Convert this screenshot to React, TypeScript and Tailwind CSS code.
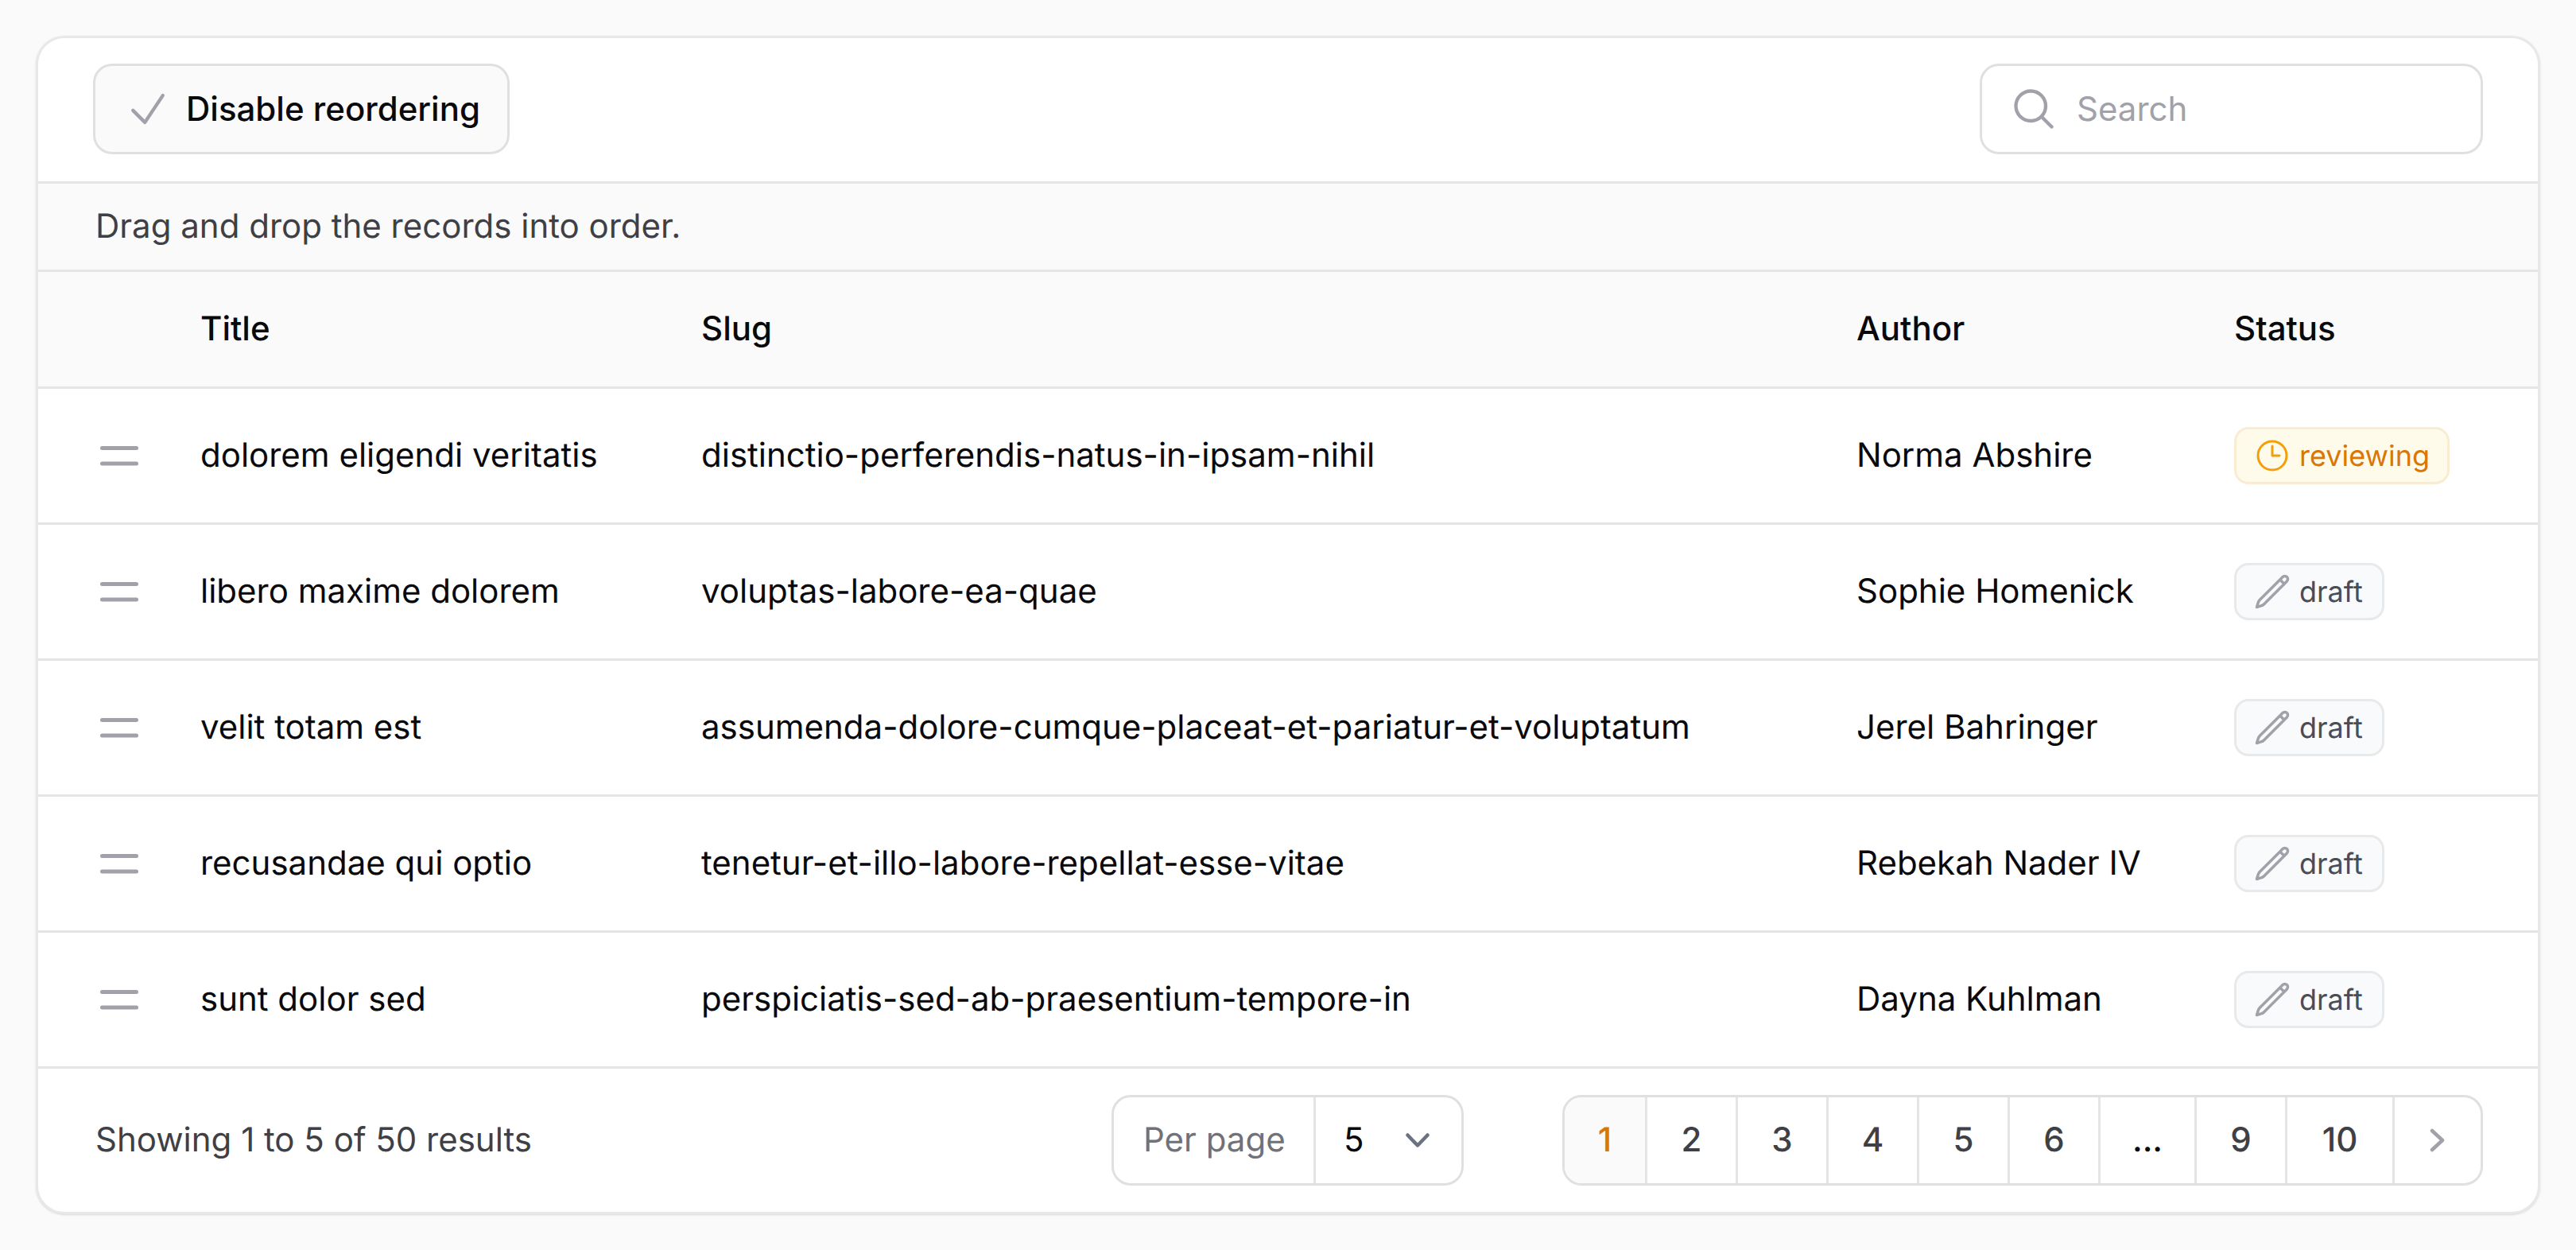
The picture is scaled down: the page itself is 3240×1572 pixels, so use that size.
import React from "react";

const rows = [
  ["dolorem eligendi veritatis", "distinctio-perferendis-natus-in-ipsam-nihil", "Norma Abshire", "reviewing"],
  ["libero maxime dolorem", "voluptas-labore-ea-quae", "Sophie Homenick", "draft"],
  ["velit totam est", "assumenda-dolore-cumque-placeat-et-pariatur-et-voluptatum", "Jerel Bahringer", "draft"],
  ["recusandae qui optio", "tenetur-et-illo-labore-repellat-esse-vitae", "Rebekah Nader IV", "draft"],
  ["sunt dolor sed", "perspiciatis-sed-ab-praesentium-tempore-in", "Dayna Kuhlman", "draft"],
];

const pages = [
  { label: "1", w: "w-[104px]", cls: "bg-[#fafafa] text-[#d97706]" },
  { label: "2", w: "w-[114px]", cls: "text-[#3f3f46]" },
  { label: "3", w: "w-[114px]", cls: "text-[#3f3f46]" },
  { label: "4", w: "w-[114px]", cls: "text-[#3f3f46]" },
  { label: "5", w: "w-[114px]", cls: "text-[#3f3f46]" },
  { label: "6", w: "w-[114px]", cls: "text-[#3f3f46]" },
  { label: "...", w: "w-[121px]", cls: "text-[#09090b]" },
  { label: "9", w: "w-[114px]", cls: "text-[#3f3f46]" },
  { label: "10", w: "w-[135px]", cls: "text-[#3f3f46]" },
];

function Icon({ d, className, sw = 1.5 }: { d: string; className: string; sw?: number }) {
  return (
    <svg viewBox="0 0 24 24" fill="none" stroke="currentColor" strokeWidth={sw} strokeLinecap="round" strokeLinejoin="round" className={className}>
      <path d={d} />
    </svg>
  );
}

function Badge({ status }: { status: string }) {
  if (status === "reviewing") {
    return (
      <span className="inline-flex h-[72px] items-center gap-[10px] rounded-[18px] border-[3px] border-[#faecd2] bg-[#fffbeb] pl-[21px] pr-[22px] text-[36px] leading-[48px] text-[#d97706]">
        <Icon d="M12 6v6h4.5m4.5 0a9 9 0 1 1-18 0 9 9 0 0 1 18 0Z" className="h-[48px] w-[48px] text-[#f59e0b]" />
        reviewing
      </span>
    );
  }
  return (
    <span className="inline-flex h-[72px] items-center gap-[10px] rounded-[18px] border-[3px] border-[#e8e9eb] bg-[#f9fafb] pl-[21px] pr-[24px] text-[36px] leading-[48px] text-[#4b4d55]">
      <Icon sw={1.75} d="m16.862 4.487 1.687-1.688a1.875 1.875 0 1 1 2.652 2.652L6.832 19.82a4.5 4.5 0 0 1-1.897 1.13l-2.685.8.8-2.685a4.5 4.5 0 0 1 1.13-1.897L16.863 4.487Zm0 0L19.5 7.125" className="h-[48px] w-[48px] text-[#a1a1aa]" />
      draft
    </span>
  );
}

const grid = "grid grid-cols-[204px_630px_1453px_475px_1fr] items-center";

export default function App() {
  return (
    <div className="min-h-[1572px] bg-[#fafafa] px-[45px] pt-[45px] font-['Inter',sans-serif] text-[42px] leading-[60px] text-[#030712] [text-rendering:geometricPrecision]">
      <div className="overflow-hidden rounded-[36px] border-[3px] border-[#e8e8e8] bg-white shadow-sm">
        <div className="flex h-[183px] items-center justify-between border-b-[3px] border-[#e5e5e5] px-[69px] pb-[2px]">
          <button className="flex h-[114px] w-[524px] items-center gap-[18px] rounded-[24px] border-[3px] border-[#e0e0e0] bg-[#fafafa] pl-[36px] font-medium text-[#09090b]">
            <Icon sw={1.75} d="M4.5 12.75l6 6 9-13.5" className="h-[60px] w-[60px] text-[#a1a1aa]" />
            Disable reordering
          </button>
          <div className="flex h-[114px] w-[633px] items-center gap-[24px] rounded-[24px] border-[3px] border-[#e0e0e0] bg-white pl-[35px]">
            <Icon sw={1.75} d="m21 21-5.197-5.197m0 0A7.5 7.5 0 1 0 5.196 5.196a7.5 7.5 0 0 0 10.607 10.607Z" className="h-[60px] w-[60px] shrink-0 text-[#a1a1aa]" />
            <input placeholder="Search" className="w-full bg-transparent outline-none placeholder:text-[#a1a1aa]" />
          </div>
        </div>

        <div className="flex h-[111px] items-center border-b-[3px] border-[#e5e5e5] bg-[#fafafa] px-[72px] text-[#3f3f46]">
          Drag and drop the records into order.
        </div>

        <div className={`${grid} h-[147px] border-b-[3px] border-[#e5e5e5] bg-[#fafafa] font-medium text-[#09090b]`}>
          <div />
          <div>Title</div>
          <div>Slug</div>
          <div>Author</div>
          <div>Status</div>
        </div>

        {rows.map((r) => (
          <div key={r[0]} className={`${grid} h-[171px] border-b-[3px] border-[#e5e5e5] text-[#09090b]`}>
            <div className="pl-[78px]">
              <svg viewBox="0 0 48 25" fill="none" stroke="#a1a1aa" strokeWidth={5} strokeLinecap="round" className="h-[25px] w-[48px]">
                <path d="M2.5 2.5h43M2.5 22h43" />
              </svg>
            </div>
            <div>{r[0]}</div>
            <div>{r[1]}</div>
            <div>{r[2]}</div>
            <div className="flex">
              <Badge status={r[3]} />
            </div>
          </div>
        ))}

        <div className="flex h-[180px] items-center px-[72px]">
          <div className="flex-1 text-[#3f3f46]">Showing 1 to 5 of 50 results</div>
          <div className="flex h-[114px] w-[443px] items-center rounded-[24px] border-[3px] border-[#e0e0e0]">
            <div className="flex h-full w-[254px] items-center border-r-[3px] border-[#e5e5e5] pl-[37px] text-[#71717a]">Per page</div>
            <div className="flex flex-1 items-center justify-between pl-[35px] pr-[40px] text-[#09090b]">
              5
              <svg viewBox="0 0 30 18" fill="none" stroke="#6b7280" strokeWidth={4.5} strokeLinecap="round" strokeLinejoin="round" className="h-[18px] w-[30px]">
                <path d="M2.5 2.5l12.5 13 12.5-13" />
              </svg>
            </div>
          </div>
          <div className="ml-[124px] mr-[-3px] flex h-[114px] items-center overflow-hidden rounded-[24px] border-[3px] border-[#e0e0e0] font-medium">
            {pages.map((p) => (
              <div key={p.label} className={`flex h-full items-center justify-center border-r-[3px] border-[#e5e5e5] ${p.w} ${p.cls}`}>
                {p.label}
              </div>
            ))}
            <div className="flex h-full w-[108px] items-center justify-center">
              <svg viewBox="0 0 20 30" fill="none" stroke="#a1a1aa" strokeWidth={4.5} strokeLinecap="round" strokeLinejoin="round" className="h-[30px] w-[20px]">
                <path d="M3 3l13 12L3 27" />
              </svg>
            </div>
          </div>
        </div>
      </div>
    </div>
  );
}
